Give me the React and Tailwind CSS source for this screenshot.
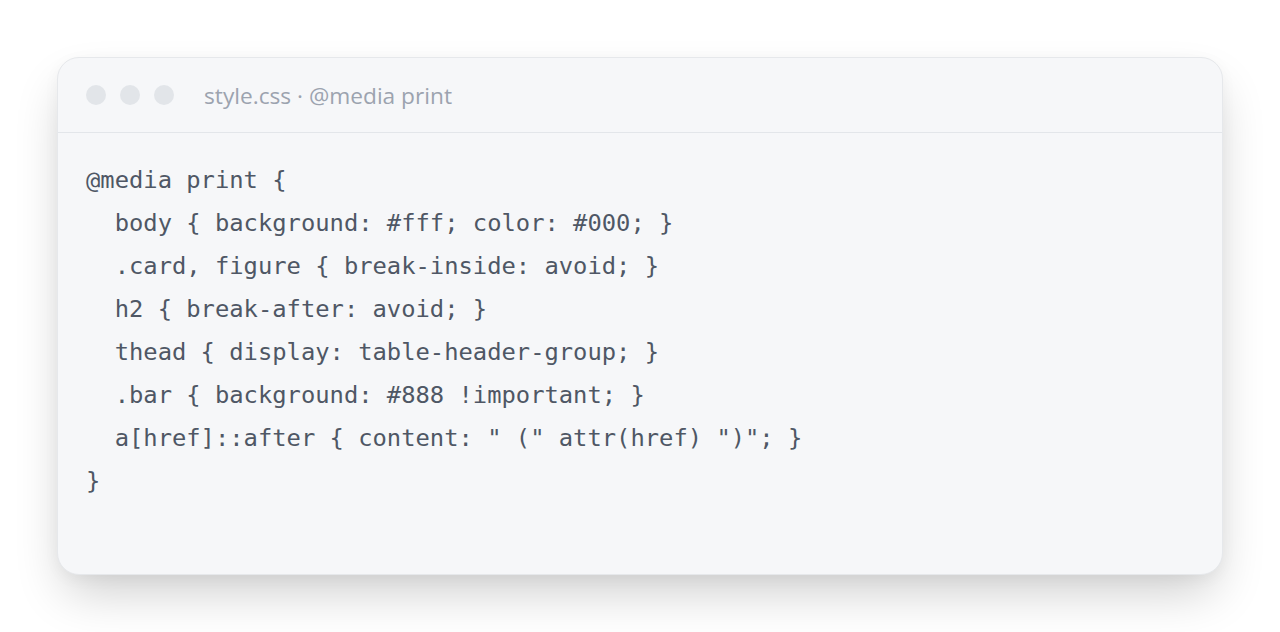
export default function App() {
  const lines = [
    "@media print {",
    "  body { background: #fff; color: #000; }",
    "  .card, figure { break-inside: avoid; }",
    "  h2 { break-after: avoid; }",
    "  thead { display: table-header-group; }",
    "  .bar { background: #888 !important; }",
    '  a[href]::after { content: " (" attr(href) ")"; }',
    "}",
  ];
  return (
    <div className="min-h-[632px] w-full bg-white pt-[57px] px-[57px]">
      <div className="h-[518px] rounded-[22px] border border-[#e6e8eb] bg-[#f6f7f9] shadow-[0_24px_50px_-8px_rgba(0,0,0,0.2),0_4px_16px_rgba(0,0,0,0.04)] overflow-hidden">
        <div className="flex h-[75px] items-center border-b border-[#e3e6ea] pl-[28px]">
          <div className="flex gap-[14px]">
            <span className="h-[20px] w-[20px] rounded-full bg-[#e2e5e9]" />
            <span className="h-[20px] w-[20px] rounded-full bg-[#e2e5e9]" />
            <span className="h-[20px] w-[20px] rounded-full bg-[#e2e5e9]" />
          </div>
          <span
            className="ml-[30px] mt-[2px] text-[22.7px] text-[#9ca3af]"
            style={{ fontFamily: '"Open Sans", "Noto Sans", sans-serif' }}
          >
            style.css · @media print
          </span>
        </div>
        <pre
          className="m-0 pl-[28px] pt-[26px] text-[23.8px] leading-[43px] text-[#4f5765]"
          style={{ fontFamily: '"DejaVu Sans Mono", "Liberation Mono", monospace' }}
        >
          {lines.join("\n")}
        </pre>
      </div>
    </div>
  );
}
